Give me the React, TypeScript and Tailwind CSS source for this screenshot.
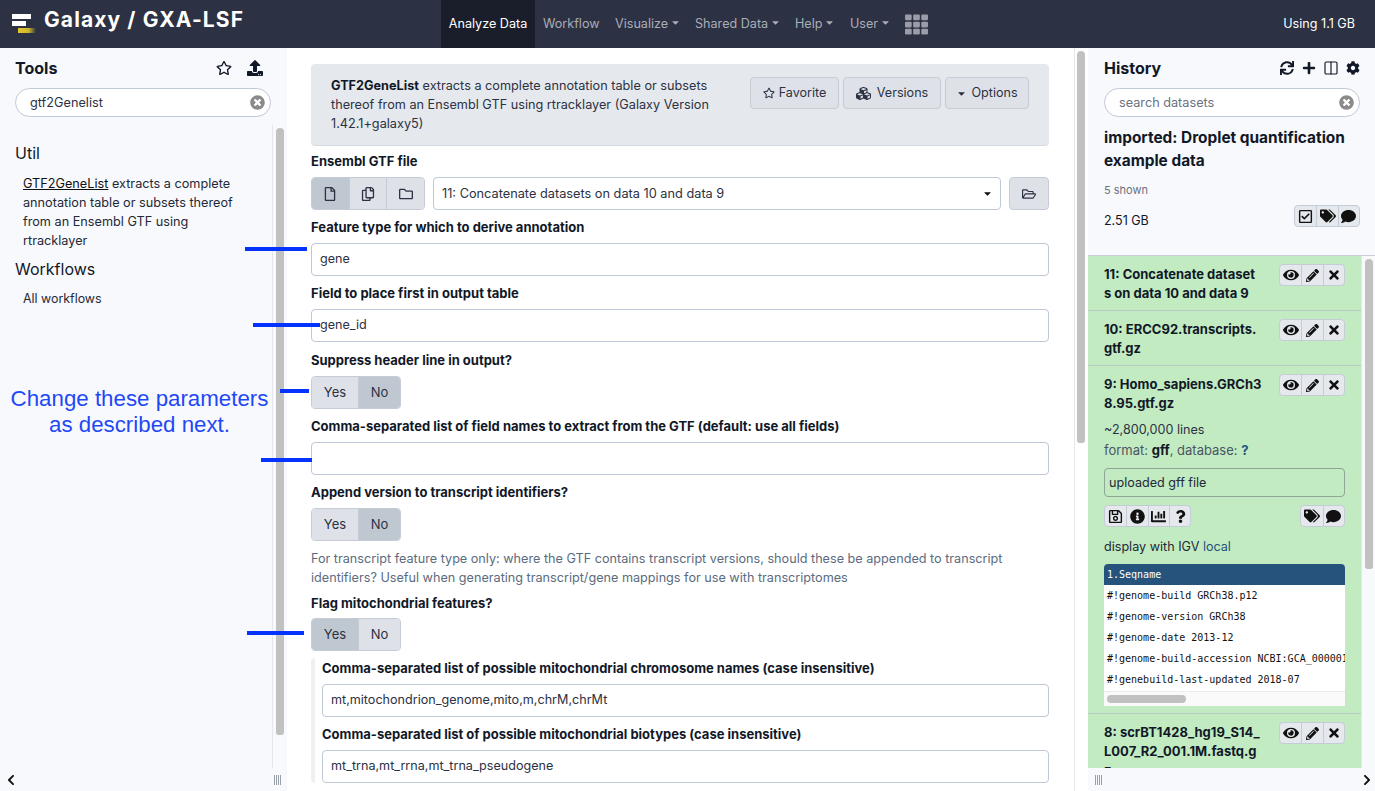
import type { ReactNode } from 'react';
import {
  FaRegStar, FaUpload, FaTimesCircle, FaRegFile, FaRegCopy, FaRegFolder, FaRegFolderOpen,
  FaCubes, FaCaretDown, FaSync, FaPlus, FaRegCheckSquare, FaTags, FaComment,
  FaEye, FaPencilAlt, FaTimes, FaRegSave, FaInfoCircle, FaChartBar, FaQuestion,
  FaChevronLeft, FaChevronRight, FaTh, FaCog,
} from 'react-icons/fa';
import { Columns2 } from 'lucide-react';

const TABELLE = [
  '#!genome-build GRCh38.p12',
  '#!genome-version GRCh38',
  '#!genome-date 2013-12',
  '#!genome-build-accession NCBI:GCA_000001405.28',
  '#!genebuild-last-updated 2018-07',
];

function Marke({ className }: { className: string }) {
  return <div className={`absolute h-1 bg-[#0433ff] ${className}`} />;
}

function Label({ children, className = '' }: { children: ReactNode; className?: string }) {
  return <div className={`h-5 mb-1.5 text-[13px] leading-5 font-bold text-[#111827] ${className}`}>{children}</div>;
}

function Eingabe({ value }: { value?: string }) {
  return (
    <div className="h-[33px] mb-[7px] bg-white border border-[#bfc8d6] rounded px-2 text-[12.6px] leading-[30px] text-[#2c3143]">
      {value}
    </div>
  );
}

function JaNein({ aktiv, className = '' }: { aktiv: 'Yes' | 'No'; className?: string }) {
  return (
    <div className={`flex w-[90px] h-[33px] border border-[#c5ccd6] rounded text-[13px] leading-[31px] text-center text-[#2c3143] overflow-hidden ${className}`}>
      <div className={`w-[46px] ${aktiv === 'Yes' ? 'bg-[#bfc8d1]' : 'bg-[#dee2e8]'}`}>Yes</div>
      <div className={`flex-1 border-l border-[#c5ccd6] ${aktiv === 'No' ? 'bg-[#bfc8d1]' : 'bg-[#dee2e8]'}`}>No</div>
    </div>
  );
}

function Knopf({ children, className }: { children: ReactNode; className: string }) {
  return (
    <div className={`flex items-center justify-center gap-1 h-8 mt-px bg-[#dee2e8] border border-[#c5ccd6] rounded text-[12.6px] text-[#2c3143] ${className}`}>
      {children}
    </div>
  );
}

function IconGruppe({ icons, className = '' }: { icons: ReactNode[]; className?: string }) {
  return (
    <div className={`flex h-[22px] bg-[#e5e9ed] border border-[#c5ccd6] rounded text-[#111] ${className}`}>
      {icons.map((icon, i) => (
        <div key={i} className={`w-[21.33px] flex items-center justify-center text-[15px] ${i > 0 ? 'border-l border-[#c5ccd6]' : ''}`}>
          {icon}
        </div>
      ))}
    </div>
  );
}

function DatensatzKnoepfe() {
  return (
    <IconGruppe
      className="absolute left-[191px] top-2"
      icons={[<FaEye key="e" className="text-[16px]" />, <FaPencilAlt key="p" className="text-[13px]" />, <FaTimes key="t" className="text-[14px]" />]}
    />
  );
}

function Griff() {
  return (
    <div className="flex gap-px">
      <span className="w-px h-[10px] bg-[#9aa0a8]" />
      <span className="w-px h-[10px] bg-[#9aa0a8]" />
      <span className="w-px h-[10px] bg-[#9aa0a8]" />
      <span className="w-px h-[10px] bg-[#9aa0a8]" />
    </div>
  );
}

function Suche({ value, placeholder }: { value?: string; placeholder?: string }) {
  return (
    <div className="flex items-center justify-between h-[29px] w-[256px] bg-white border border-[#bfc8d6] rounded-full pl-[14px] pr-[5px] text-[12.7px]">
      {value ? <span className="text-[#2c3143]">{value}</span> : <span className="text-[#6b7280]">{placeholder}</span>}
      <FaTimesCircle className="text-[15px] text-[#8a8a8a]" />
    </div>
  );
}

export default function App() {
  return (
    <div className="relative flex flex-col h-screen overflow-hidden bg-white font-[family-name:Inter,sans-serif] text-[#111827]">
      <header className="flex items-stretch h-12 shrink-0 bg-[#2c3143] text-[12.6px]">
        <div className="flex items-center w-[441px] pl-3">
          <svg width="24" height="20" viewBox="0 0 24 20" className="shrink-0">
            <rect x="0" y="0" width="19" height="5" fill="#fff" />
            <rect x="0" y="7" width="14" height="5" fill="#fff" />
            <defs>
              <linearGradient id="gelb" x1="0" x2="1" y1="0" y2="0">
                <stop offset="0" stopColor="#e5c72b" />
                <stop offset="0.6" stopColor="#cdb42b" />
                <stop offset="1" stopColor="#2c3143" />
              </linearGradient>
            </defs>
            <rect x="6" y="14" width="18" height="5" fill="url(#gelb)" />
          </svg>
          <span className="ml-2 mb-2 text-[21px] font-bold tracking-[1.1px] text-white whitespace-pre">Galaxy / GXA-LSF</span>
        </div>
        <div className="flex items-center justify-center w-[94px] pt-px bg-[#1a1d2a] text-white">Analyze Data</div>
        <nav className="flex items-center pl-2 pt-px text-[#a9adb8]">
          <span className="w-[72px]">Workflow</span>
          <span className="flex items-center w-[80px]">Visualize<FaCaretDown className="ml-0.5 -mt-[3px] text-[11px]" /></span>
          <span className="flex items-center w-[100px]">Shared Data<FaCaretDown className="ml-0.5 -mt-[3px] text-[11px]" /></span>
          <span className="flex items-center w-[55px]">Help<FaCaretDown className="ml-0.5 -mt-[3px] text-[11px]" /></span>
          <span className="flex items-center w-[55px]">User<FaCaretDown className="ml-0.5 -mt-[3px] text-[11px]" /></span>
          <FaTh className="text-[23px] text-[#9a9da7]" />
        </nav>
        <div className="ml-auto flex items-center pr-5 pt-px text-white">Using 1.1 GB</div>
      </header>

      <div className="flex flex-1 min-h-0">
        <aside className="flex flex-col w-[287px] shrink-0 bg-[#f8f9fc]">
          <div className="pl-[15px] pr-4 pt-[10px]">
            <div className="flex items-center justify-between h-5 mb-[10px]">
              <span className="text-[16px] font-bold">Tools</span>
              <div className="flex items-center gap-[15px] pr-[8px] text-[16px]">
                <FaRegStar />
                <FaUpload />
              </div>
            </div>
            <Suche value="gtf2Genelist" />
          </div>
          <div className="flex flex-1 min-h-0 mt-2">
            <div className="flex-1 pl-[15px] pr-4 pt-[17px] overflow-hidden">
              <div className="h-[22px] text-[16px] leading-[22px]">Util</div>
              <div className="mt-[10px] ml-2 text-[12.7px] leading-[19px] text-[#1f2937]">
                <span className="underline text-[#111]">GTF2GeneList</span> extracts a complete<br />
                annotation table or subsets thereof<br />
                from an Ensembl GTF using<br />
                rtracklayer
              </div>
              <div className="mt-[8px] h-[22px] text-[16px] leading-[22px]">Workflows</div>
              <div className="mt-[9px] ml-2 text-[12.4px] leading-[19px] text-[#1f2937]">All workflows</div>
            </div>
            <div className="w-[15px] shrink-0 border-l border-[#e5e7eb] pl-[3px] pt-[3px]">
              <div className="w-2 h-[607px] rounded-t-md rounded-b bg-[#c1c1c1]" />
            </div>
          </div>
          <div className="flex items-center justify-between h-[23px] shrink-0 pl-[5px] pr-[6px] text-[13px]">
            <FaChevronLeft className="text-[12px] text-[#111]" />
            <Griff />
          </div>
        </aside>

        <main className="w-[787px] shrink-0 overflow-hidden pl-6 pr-[25px] pt-4">
          <div className="flex justify-between h-[82px] mb-[5px] bg-[#e5e9ed] border-b border-[#d5dae0] rounded pl-5 pr-5 pt-3">
            <div className="w-[402px] text-[12.7px] leading-[19px] text-[#2c3143]">
              <b className="text-[#111827]">GTF2GeneList</b> extracts a complete annotation table or subsets thereof from an Ensembl GTF using rtracklayer (Galaxy Version 1.42.1+galaxy5)
            </div>
            <div className="flex gap-1">
              <Knopf className="w-[89px]"><FaRegStar className="text-[12px]" />Favorite</Knopf>
              <Knopf className="w-[98px] gap-1.5"><FaCubes className="text-[15px]" />Versions</Knopf>
              <Knopf className="w-[84px]"><FaCaretDown className="text-[11px]" />Options</Knopf>
            </div>
          </div>

          <Label>Ensembl GTF file</Label>
          <div className="flex h-[33px] mb-[7px]">
            <div className="flex w-[114px] border border-[#c5ccd6] rounded overflow-hidden text-[14px] text-[#2c3143]">
              <div className="flex-1 flex items-center justify-center bg-[#bfc8d1]"><FaRegFile /></div>
              <div className="flex-1 flex items-center justify-center bg-[#dee2e8] border-l border-[#c5ccd6]"><FaRegCopy /></div>
              <div className="flex-1 flex items-center justify-center bg-[#dee2e8] border-l border-[#c5ccd6]"><FaRegFolder /></div>
            </div>
            <div className="flex items-center justify-between flex-1 ml-2 bg-white border border-[#bfc8d6] rounded pl-2 pr-[7px] text-[12.75px] text-[#2c3143]">
              <span>11: Concatenate datasets on data 10 and data 9</span>
              <FaCaretDown className="text-[11px] text-[#111]" />
            </div>
            <div className="flex items-center justify-center w-10 ml-2 bg-[#dee2e8] border border-[#c5ccd6] rounded text-[14px] text-[#2c3143]"><FaRegFolderOpen /></div>
          </div>

          <Label>Feature type for which to derive annotation</Label>
          <Eingabe value="gene" />
          <Label>Field to place first in output table</Label>
          <Eingabe value="gene_id" />
          <Label className="mt-[8px]">Suppress header line in output?</Label>
          <JaNein aktiv="No" className="mb-[7px]" />
          <Label>Comma-separated list of field names to extract from the GTF (default: use all fields)</Label>
          <Eingabe />
          <Label>Append version to transcript identifiers?</Label>
          <JaNein aktiv="No" className="mb-[7px]" />
          <div className="mb-[6px] pt-px text-[12.65px] leading-[19px] text-[#5b6b80]">
            For transcript feature type only: where the GTF contains transcript versions, should these be appended to transcript identifiers? Useful when generating transcript/gene mappings for use with transcriptomes
          </div>
          <Label className="mb-[5px]">Flag mitochondrial features?</Label>
          <JaNein aktiv="Yes" className="mb-2" />
          <div className="border-l-[4px] border-[#eef0f3] rounded-l pl-[7px] -mt-px">
            <Label>Comma-separated list of possible mitochondrial chromosome names (case insensitive)</Label>
            <Eingabe value="mt,mitochondrion_genome,mito,m,chrM,chrMt" />
            <Label>Comma-separated list of possible mitochondrial biotypes (case insensitive)</Label>
            <Eingabe value="mt_trna,mt_rrna,mt_trna_pseudogene" />
          </div>
        </main>

        <div className="w-[14px] shrink-0 border-l border-[#e5e7eb] pl-[2px] pt-[3px]">
          <div className="w-2 h-[392px] rounded-t-md rounded-b bg-[#c1c1c1]" />
        </div>

        <aside className="flex flex-col w-[287px] shrink-0 bg-[#f8f9fc]">
          <div className="h-[208px] shrink-0 pl-4 pt-[10px] pr-[15px] border-b border-[#c8ced8]">
            <div className="flex items-center justify-between h-5 mb-[10px]">
              <span className="text-[16px] font-bold">History</span>
              <div className="flex items-center gap-[8px] text-[14px]">
                <FaSync />
                <FaPlus />
                <Columns2 size={16} strokeWidth={1.75} className="-mx-px" />
                <FaCog />
              </div>
            </div>
            <Suche placeholder="search datasets" />
            <div className="mt-[9px] w-[250px] text-[15.4px] leading-[23px] font-bold">imported: Droplet quantification example data</div>
            <div className="mt-[10px] text-[11px] leading-4 text-[#6b7280]">5 shown</div>
            <div className="flex items-center justify-between mt-[7px] h-[22px] text-[12.5px]">
              <span className="mt-[10px]">2.51 GB</span>
              <IconGruppe icons={[<FaRegCheckSquare key="c" />, <FaTags key="t" className="text-[16px]" />, <FaComment key="k" />]} />
            </div>
          </div>
          <div className="flex flex-1 min-h-0">
            <div className="w-[273px] shrink-0 overflow-hidden bg-[#c2ebc2] text-[13px]">
              <div className="relative h-[55px] pl-4 pt-[9px] border-b border-[#b4cdc0]">
                <div className="font-bold leading-[19px]">11: Concatenate dataset<br />s on data 10 and data 9</div>
                <DatensatzKnoepfe />
              </div>
              <div className="relative h-[55px] pl-4 pt-[9px] border-b border-[#b4cdc0]">
                <div className="font-bold leading-[19px]">10: ERCC92.transcripts.<br />gtf.gz</div>
                <DatensatzKnoepfe />
              </div>
              <div className="relative h-[348px] pl-4 pr-4 pt-[9px] border-b border-[#b4cdc0]">
                <div className="font-bold leading-[19px]">9: Homo_sapiens.GRCh3<br />8.95.gtf.gz</div>
                <DatensatzKnoepfe />
                <div className="mt-[6px] h-[21px] text-[12.6px] leading-[21px] text-[#2c3143]">~2,800,000 lines</div>
                <div className="h-[21px] leading-[21px] text-[#4b5563]">format: <b className="text-[#111827]">gff</b>, database: <b className="text-[#25537b]">?</b></div>
                <div className="mt-[7px] h-[29px] border border-[#8fa596] rounded px-1 text-[12.6px] leading-[27px] text-[#1f2937]">uploaded gff file</div>
                <div className="flex justify-between mt-2">
                  <IconGruppe icons={[<FaRegSave key="s" />, <FaInfoCircle key="i" />, <FaChartBar key="c" />, <FaQuestion key="q" className="text-[13px]" />]} />
                  <IconGruppe icons={[<FaTags key="t" className="text-[16px]" />, <FaComment key="k" />]} />
                </div>
                <div className="mt-2 h-[24px] text-[12.6px] leading-[24px] text-[#1f2937]">display with IGV <span className="text-[#25537b]">local</span></div>
                <div className="mt-[5px] bg-white overflow-hidden rounded-t-sm font-[family-name:'DejaVu_Sans_Mono',monospace] text-[10px]">
                  <div className="h-[21px] pl-[3px] leading-[21px] bg-[#25537b] text-white">1.Seqname</div>
                  {TABELLE.map((zeile) => (
                    <div key={zeile} className="h-[21px] pl-[3px] leading-[21px] whitespace-nowrap text-[#111]">{zeile}</div>
                  ))}
                  <div className="h-[15px] mt-px bg-[#fafafa] border-t border-[#ececec] pl-[3px] pt-[3px]">
                    <div className="w-[79px] h-2 rounded-full bg-[#c1c1c1]" />
                  </div>
                </div>
              </div>
              <div className="relative pl-4 pt-[9px]">
                <div className="font-bold leading-[19px]">8: scrBT1428_hg19_S14_<br />L007_R2_001.1M.fastq.g<br />z</div>
                <DatensatzKnoepfe />
              </div>
            </div>
            <div className="flex-1 border-l border-[#e5e7eb] pl-[3px] pt-[3px]">
              <div className="w-2 h-[310px] rounded-t-md rounded-b bg-[#c1c1c1]" />
            </div>
          </div>
          <div className="flex items-center justify-between h-[23px] shrink-0 pl-[7px] pr-[2px]">
            <Griff />
            <FaChevronRight className="text-[12px] text-[#111]" />
          </div>
        </aside>
      </div>

      <Marke className="left-[245px] top-[247px] w-[62px]" />
      <Marke className="left-[253px] top-[323px] w-[67px]" />
      <Marke className="left-[280px] top-[389px] w-[29px]" />
      <Marke className="left-[261px] top-[458px] w-[51px]" />
      <Marke className="left-[247px] top-[631px] w-[57px]" />
      <div className="absolute left-0 top-[386px] w-[279px] text-center font-[family-name:'Liberation_Sans',sans-serif] text-[22.3px] leading-[26px] text-[#1f48f5]">
        Change these parameters<br />as described next.
      </div>
    </div>
  );
}
